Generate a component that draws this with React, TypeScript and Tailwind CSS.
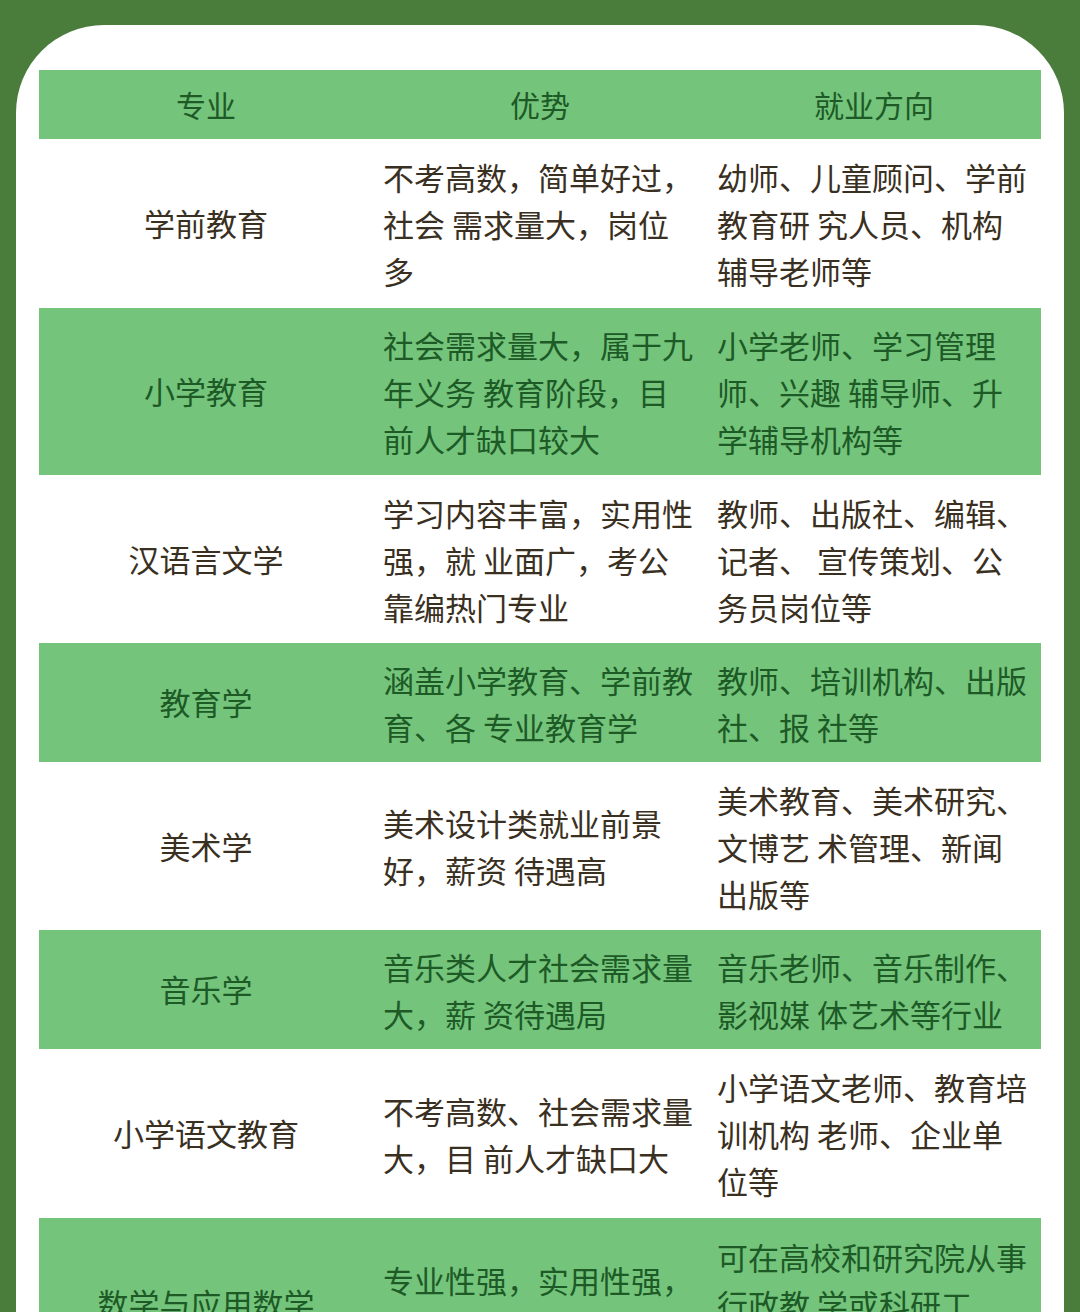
const rows: { major: string; adv: string[]; job: string[]; h: string }[] = [
  {
    major: "学前教育",
    adv: ["不考高数，简单好过，", "社会 需求量大，岗位", "多"],
    job: ["幼师、儿童顾问、学前", "教育研 究人员、机构", "辅导老师等"],
    h: "h-[169px]",
  },
  {
    major: "小学教育",
    adv: ["社会需求量大，属于九", "年义务 教育阶段，目", "前人才缺口较大"],
    job: ["小学老师、学习管理", "师、兴趣 辅导师、升", "学辅导机构等"],
    h: "h-[167px]",
  },
  {
    major: "汉语言文学",
    adv: ["学习内容丰富，实用性", "强，就 业面广，考公", "靠编热门专业"],
    job: ["教师、出版社、编辑、", "记者、 宣传策划、公", "务员岗位等"],
    h: "h-[168px]",
  },
  {
    major: "教育学",
    adv: ["涵盖小学教育、学前教", "育、各 专业教育学"],
    job: ["教师、培训机构、出版", "社、报 社等"],
    h: "h-[119px]",
  },
  {
    major: "美术学",
    adv: ["美术设计类就业前景", "好，薪资 待遇高"],
    job: ["美术教育、美术研究、", "文博艺 术管理、新闻", "出版等"],
    h: "h-[168px]",
  },
  {
    major: "音乐学",
    adv: ["音乐类人才社会需求量", "大，薪 资待遇局"],
    job: ["音乐老师、音乐制作、", "影视媒 体艺术等行业"],
    h: "h-[119px]",
  },
  {
    major: "小学语文教育",
    adv: ["不考高数、社会需求量", "大，目 前人才缺口大"],
    job: ["小学语文老师、教育培", "训机构 老师、企业单", "位等"],
    h: "h-[169px]",
  },
  {
    major: "数学与应用数学",
    adv: ["专业性强，实用性强，", "就业面广"],
    job: ["可在高校和研究院从事", "行政教 学或科研工", "作等"],
    h: "h-[170px]",
  },
];

function Lines({ lines }: { lines: string[] }) {
  return (
    <div className="flex flex-col">
      {lines.map((l, i) => (
        <div key={i} className="whitespace-pre leading-[47px]">
          {l}
        </div>
      ))}
    </div>
  );
}

export default function App() {
  return (
    <div
      className="h-[1312px] w-[1080px] overflow-hidden bg-[#4a7c3c] pt-[25px] px-[16px]"
      style={{ fontFamily: '"Noto Sans CJK SC", "Noto Sans", sans-serif' }}
    >
      <div className="h-[1400px] rounded-t-[88px] bg-white px-[23px] pt-[45px]">
        <div className="grid h-[69px] grid-cols-3 items-center bg-[#74c47c] text-[30px] text-[#1d5a26]">
          <div className="text-center">专业</div>
          <div className="text-center">优势</div>
          <div className="text-center">就业方向</div>
        </div>
        {rows.map((r, i) => {
          const green = i % 2 === 1;
          return (
            <div
              key={r.major}
              className={
                "grid grid-cols-3 items-center text-[31px] " +
                r.h +
                (green ? " bg-[#74c47c] text-[#1d5a26]" : " bg-white text-[#3a3022]")
              }
            >
              <div className="text-center">{r.major}</div>
              <div className="pl-[10px]">
                <Lines lines={r.adv} />
              </div>
              <div className="pl-[10px]">
                <Lines lines={r.job} />
              </div>
            </div>
          );
        })}
      </div>
    </div>
  );
}
